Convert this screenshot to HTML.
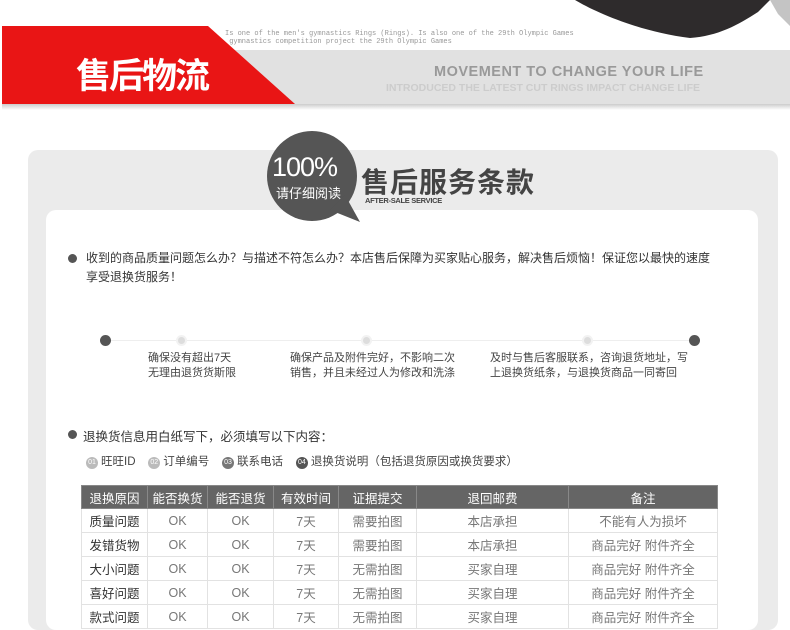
<!DOCTYPE html>
<html><head><meta charset="utf-8"><style>
*{margin:0;padding:0;box-sizing:border-box}
body{width:790px;height:616px;overflow:hidden;background:#fff;position:relative;font-family:"Liberation Sans","Noto Sans CJK SC",sans-serif;color:#333}
.a{position:absolute}
table{border-collapse:collapse;position:absolute;left:81px;top:485px;width:637px;font-size:12.5px;color:#777}
td,th{border:1px solid #e2e2e2;text-align:center;height:24px;font-weight:normal}
th{background:#656565;color:#fff;border-color:#888;height:23px}
td:first-child{color:#333}
.n{display:inline-block;width:12px;height:12px;border-radius:50%;background:#bbb;color:#fff;font-size:7px;line-height:12px;text-align:center;vertical-align:1px;margin-right:3px}
</style></head><body>
<svg class="a" style="left:0;top:0" width="790" height="120">
<defs><linearGradient id="g" x1="0" y1="0" x2="0" y2="1"><stop offset="0" stop-color="#ccc"/><stop offset="1" stop-color="#fff"/></linearGradient></defs>
<path d="M575 0 C595 12 640 32 690 38 C718 36 738 25 758 12 L770 0Z" fill="#2e2b2c"/>
<path d="M770 0 L790 0 L790 26 L778 14Z" fill="#c4c4c4"/>
<rect x="150" y="50" width="640" height="55" fill="#e1e1e1"/>
<rect x="2" y="104" width="788" height="6" fill="url(#g)"/>
<polygon points="2,26 208,26 295,104 2,104" fill="#e91515"/>
</svg>
<div class="a" style="left:225px;top:30px;font:7px 'Liberation Mono',monospace;color:#999;line-height:8px">Is one of the men's gymnastics Rings (Rings). Is also one of the 29th Olympic Games<br>&nbsp;gymnastics competition project the 29th Olympic Games</div>
<div class="a" style="left:76px;top:48px;font-size:35px;font-weight:bold;color:#fff;letter-spacing:-2px">售后物流</div>
<div class="a" style="left:434px;top:64px;font-size:14.5px;font-weight:bold;color:#999;letter-spacing:0.5px">MOVEMENT TO CHANGE YOUR LIFE</div>
<div class="a" style="left:386px;top:82px;font-size:10.5px;font-weight:bold;color:#ccc">INTRODUCED THE LATEST CUT RINGS IMPACT CHANGE LIFE</div>

<div class="a" style="left:28px;top:150px;width:750px;height:480px;background:#ebebeb;border-radius:10px"></div>
<div class="a" style="left:46px;top:210px;width:712px;height:420px;background:#fff;border-radius:10px"></div>
<svg class="a" style="left:260px;top:130px" width="110" height="100"><circle cx="52" cy="46" r="45" fill="#555"/><polygon points="70,80 100,92 85,65" fill="#555"/></svg>
<div class="a" style="left:272px;top:152px;font-size:27px;color:#fff;letter-spacing:-1px">100%</div>
<div class="a" style="left:276px;top:183px;font-size:13px;color:#fff">请仔细阅读</div>
<div class="a" style="left:361px;top:161px;font-size:28px;font-weight:bold;color:#444;letter-spacing:1px">售后服务条款</div>
<div class="a" style="left:365px;top:196px;font-size:7.5px;font-weight:bold;color:#444;letter-spacing:-0.3px">AFTER-SALE SERVICE</div>

<div class="a" style="left:68px;top:254px;width:9px;height:9px;border-radius:50%;background:#555"></div>
<div class="a" style="left:86px;top:249px;width:630px;font-size:12px;line-height:19px;color:#333">收到的商品质量问题怎么办？与描述不符怎么办？本店售后保障为买家贴心服务，解决售后烦恼！保证您以最快的速度享受退换货服务！</div>

<div class="a" style="left:105px;top:340px;width:590px;height:1px;background:#eee"></div>
<div class="a" style="left:100px;top:335px;width:11px;height:11px;border-radius:50%;background:#555"></div>
<div class="a" style="left:689px;top:335px;width:11px;height:11px;border-radius:50%;background:#555"></div>
<div class="a" style="left:176px;top:335px;width:11px;height:11px;border-radius:50%;background:#ddd;border:2px solid #f2f2f2"></div>
<div class="a" style="left:361px;top:335px;width:11px;height:11px;border-radius:50%;background:#ddd;border:2px solid #f2f2f2"></div>
<div class="a" style="left:582px;top:335px;width:11px;height:11px;border-radius:50%;background:#ddd;border:2px solid #f2f2f2"></div>
<div class="a" style="left:148px;top:351px;font-size:11px;line-height:15px;color:#444">确保没有超出7天<br>无理由退货货斯限</div>
<div class="a" style="left:290px;top:351px;font-size:11px;line-height:15px;color:#444">确保产品及附件完好，不影响二次<br>销售，并且未经过人为修改和洗涤</div>
<div class="a" style="left:490px;top:351px;font-size:11px;line-height:15px;color:#444">及时与售后客服联系，咨询退货地址，写<br>上退换货纸条，与退换货商品一同寄回</div>

<div class="a" style="left:68px;top:430px;width:9px;height:9px;border-radius:50%;background:#555"></div>
<div class="a" style="left:83px;top:426px;font-size:12.5px;color:#333">退换货信息用白纸写下，必须填写以下内容：</div>
<div class="a" style="left:86px;top:453px;font-size:11.5px;color:#444"><span class="n">01</span>旺旺ID&nbsp;&nbsp;&nbsp;&nbsp;<span class="n">02</span>订单编号&nbsp;&nbsp;&nbsp;&nbsp;<span class="n" style="background:#777">03</span>联系电话&nbsp;&nbsp;&nbsp;&nbsp;<span class="n" style="background:#555">04</span>退换货说明（包括退货原因或换货要求）</div>

<table>
<tr><th style="width:66px">退换原因</th><th style="width:60px">能否换货</th><th style="width:66px">能否退货</th><th style="width:65px">有效时间</th><th style="width:78px">证据提交</th><th style="width:152px">退回邮费</th><th>备注</th></tr>
<tr><td>质量问题</td><td>OK</td><td>OK</td><td>7天</td><td>需要拍图</td><td>本店承担</td><td>不能有人为损坏</td></tr>
<tr><td>发错货物</td><td>OK</td><td>OK</td><td>7天</td><td>需要拍图</td><td>本店承担</td><td>商品完好 附件齐全</td></tr>
<tr><td>大小问题</td><td>OK</td><td>OK</td><td>7天</td><td>无需拍图</td><td>买家自理</td><td>商品完好 附件齐全</td></tr>
<tr><td>喜好问题</td><td>OK</td><td>OK</td><td>7天</td><td>无需拍图</td><td>买家自理</td><td>商品完好 附件齐全</td></tr>
<tr><td>款式问题</td><td>OK</td><td>OK</td><td>7天</td><td>无需拍图</td><td>买家自理</td><td>商品完好 附件齐全</td></tr>
</table>
</body></html>
